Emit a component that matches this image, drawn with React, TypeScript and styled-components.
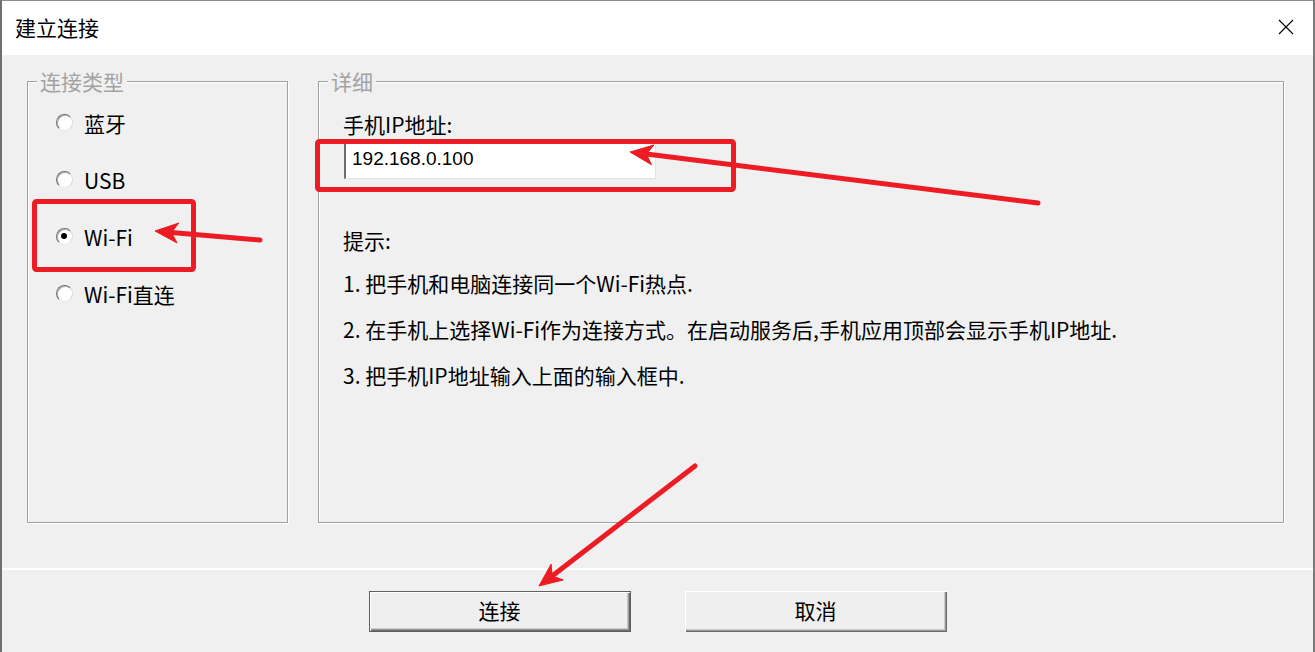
import React, { FunctionComponent } from "react";
import styled, { createGlobalStyle } from "styled-components";

const GlobalStyle = createGlobalStyle`
  html, body {
    margin: 0;
    padding: 0;
    background: #f0f0f0;
    overflow: hidden;
  }
`;

const CJK = `"Noto Sans CJK SC", "Noto Sans", sans-serif`;

const Page = styled.div`
  position: relative;
  width: 1315px;
  height: 652px;
`;

const Window = styled.div`
  box-sizing: border-box;
  width: 1315px;
  height: 652px;
  display: flex;
  flex-direction: column;
  border-top: 1px solid #8c8c8c;
  border-left: 2px solid #6f6f6f;
  border-right: 2px solid #7a7a7a;
  font-family: ${CJK};
  color: #000;
`;

const TitleBar = styled.div`
  height: 54px;
  flex: none;
  display: flex;
  align-items: center;
  justify-content: space-between;
  padding: 0 19px 2px 13px;
  box-sizing: border-box;
  background: #fff;
`;

const Title = styled.span`
  font-size: 21px;
  line-height: 26px;
`;

const CloseButton = styled.span`
  display: flex;
  width: 16px;
  height: 16px;
`;

const Body = styled.div`
  flex: 1;
  display: flex;
  flex-direction: column;
  background: #f0f0f0;
`;

const Main = styled.div`
  flex: 1;
  display: flex;
  gap: 30px;
  padding: 14px 29px 0 25px;
`;

const GroupBox = styled.fieldset<{ $width?: number }>`
  box-sizing: border-box;
  margin: 0;
  padding: 0;
  min-width: 0;
  height: 454px;
  width: ${(p) => (p.$width ? `${p.$width}px` : "auto")};
  flex: ${(p) => (p.$width ? "none" : "1")};
  border: 1px solid #a0a0a0;
  box-shadow: inset 1px 1px 0 #fff, 1px 1px 0 #fff;
  display: flex;
  flex-direction: column;
`;

const Legend = styled.legend`
  margin-left: 9px;
  padding: 0 3px;
  background: #f0f0f0;
  color: #a3a3a3;
  font-size: 21px;
  line-height: 24px;
`;

const RadioList = styled.div`
  display: flex;
  flex-direction: column;
  padding: 1px 0 0 28px;
`;

const RadioRow = styled.label`
  display: flex;
  align-items: center;
  gap: 11px;
  height: 57px;
  font-size: 21px;
`;

const RadioCircle = styled.span<{ $checked?: boolean }>`
  position: relative;
  box-sizing: border-box;
  width: 17px;
  height: 17px;
  border-radius: 50%;
  background: #fff;
  border: 1px solid;
  border-color: #6e6e6e #dcdcdc #e6e6e6 #6e6e6e;
  box-shadow: inset 1px 1px 0 #b4b4b4;

  &::after {
    content: "";
    display: ${(p) => (p.$checked ? "block" : "none")};
    position: absolute;
    left: 4px;
    top: 4px;
    width: 6px;
    height: 6px;
    border-radius: 50%;
    background: #000;
  }
`;

const Details = styled.div`
  display: flex;
  flex-direction: column;
  padding-left: 24px;
`;

const FieldLabel = styled.div`
  margin-top: 16px;
  font-size: 21px;
  line-height: 30px;
`;

const IpInput = styled.div`
  box-sizing: border-box;
  width: 312px;
  height: 37px;
  margin: 3px 0 0 1px;
  display: flex;
  align-items: center;
  padding: 0 0 4px 6px;
  background: #fff;
  border-left: 2px solid #6e6e6e;
  border-top: 1px solid #a0a0a0;
  border-right: 1px solid #e3e3e3;
  border-bottom: 1px solid #e3e3e3;
  font-family: "Liberation Sans", Arial, sans-serif;
  font-size: 19px;
`;

const HintTitle = styled.div`
  margin-top: 40px;
  font-size: 21px;
  line-height: 42px;
`;

const HintLine = styled.div`
  font-size: 21px;
  line-height: 46px;
  white-space: nowrap;
  margin-top: -1px;
  margin-bottom: 1px;
`;

const Footer = styled.div`
  height: 84px;
  flex: none;
  display: flex;
  justify-content: center;
  gap: 54px;
  padding-top: 21px;
  box-sizing: border-box;
  border-top: 2px solid #fff;
`;

const DialogButton = styled.button<{ $default?: boolean }>`
  box-sizing: border-box;
  width: 262px;
  height: 41px;
  padding: 0 0 4px;
  background: #efefef;
  font-family: ${CJK};
  font-size: 21px;
  line-height: 26px;
  color: #000;
  border: ${(p) => (p.$default ? "1px solid #5f5f5f" : "none")};
  box-shadow: inset 1px 1px 0 #fff, inset -1px -1px 0 #6a6a6a,
    inset -2px -2px 0 #9a9a9a, inset -3px -3px 0 #c8c8c8;
`;

const Overlay = styled.svg`
  position: absolute;
  left: 0;
  top: 0;
  pointer-events: none;
`;

const RED = "#ed1c24";

interface ArrowProps {
  from: [number, number];
  to: [number, number];
}

const Arrow: FunctionComponent<ArrowProps> = ({ from, to }) => {
  const [sx, sy] = from;
  const [tx, ty] = to;
  const len = Math.hypot(tx - sx, ty - sy);
  const ux = (tx - sx) / len;
  const uy = (ty - sy) / len;
  const nx = -uy;
  const ny = ux;
  const L = 23;
  const W = 10;
  const bx = tx - ux * L;
  const by = ty - uy * L;
  const kx = tx - ux * L * 0.72;
  const ky = ty - uy * L * 0.72;
  const head = `M${tx} ${ty} L${bx + nx * W} ${by + ny * W} L${kx} ${ky} L${bx - nx * W} ${by - ny * W} Z`;

  return (
    <g>
      <line x1={sx} y1={sy} x2={kx} y2={ky} stroke={RED} strokeWidth={5} strokeLinecap="round" />
      <path d={head} fill={RED} stroke={RED} strokeWidth={1} strokeLinejoin="round" />
    </g>
  );
};

const Annotations: FunctionComponent = () => (
  <Overlay width={1315} height={652} viewBox="0 0 1315 652">
    <rect x={34.5} y={201.5} width={159} height={68} rx={2} fill="none" stroke={RED} strokeWidth={5} />
    <rect x={317.5} y={141.5} width={416} height={48} rx={2} fill="none" stroke={RED} strokeWidth={5} />
    <Arrow from={[260, 240]} to={[155, 231]} />
    <Arrow from={[1038, 203]} to={[630, 152]} />
    <Arrow from={[695, 466]} to={[539, 586]} />
  </Overlay>
);

const radios = [
  { label: "蓝牙", checked: false },
  { label: "USB", checked: false },
  { label: "Wi-Fi", checked: true },
  { label: "Wi-Fi直连", checked: false },
];

const hints = [
  "1. 把手机和电脑连接同一个Wi-Fi热点.",
  "2. 在手机上选择Wi-Fi作为连接方式。在启动服务后,手机应用顶部会显示手机IP地址.",
  "3. 把手机IP地址输入上面的输入框中.",
];

const App: FunctionComponent = () => (
  <Page>
    <GlobalStyle />
    <Window>
      <TitleBar>
        <Title>建立连接</Title>
        <CloseButton>
          <svg width="16" height="16" viewBox="0 0 16 16">
            <path d="M1 1 L15 15 M15 1 L1 15" stroke="#000" strokeWidth="1.1" />
          </svg>
        </CloseButton>
      </TitleBar>
      <Body>
        <Main>
          <GroupBox $width={261}>
            <Legend>连接类型</Legend>
            <RadioList>
              {radios.map((r) => (
                <RadioRow key={r.label}>
                  <RadioCircle $checked={r.checked} />
                  {r.label}
                </RadioRow>
              ))}
            </RadioList>
          </GroupBox>
          <GroupBox>
            <Legend>详细</Legend>
            <Details>
              <FieldLabel>手机IP地址:</FieldLabel>
              <IpInput>192.168.0.100</IpInput>
              <HintTitle>提示:</HintTitle>
              {hints.map((h) => (
                <HintLine key={h}>{h}</HintLine>
              ))}
            </Details>
          </GroupBox>
        </Main>
        <Footer>
          <DialogButton $default>连接</DialogButton>
          <DialogButton>取消</DialogButton>
        </Footer>
      </Body>
    </Window>
    <Annotations />
  </Page>
);

export default App;
